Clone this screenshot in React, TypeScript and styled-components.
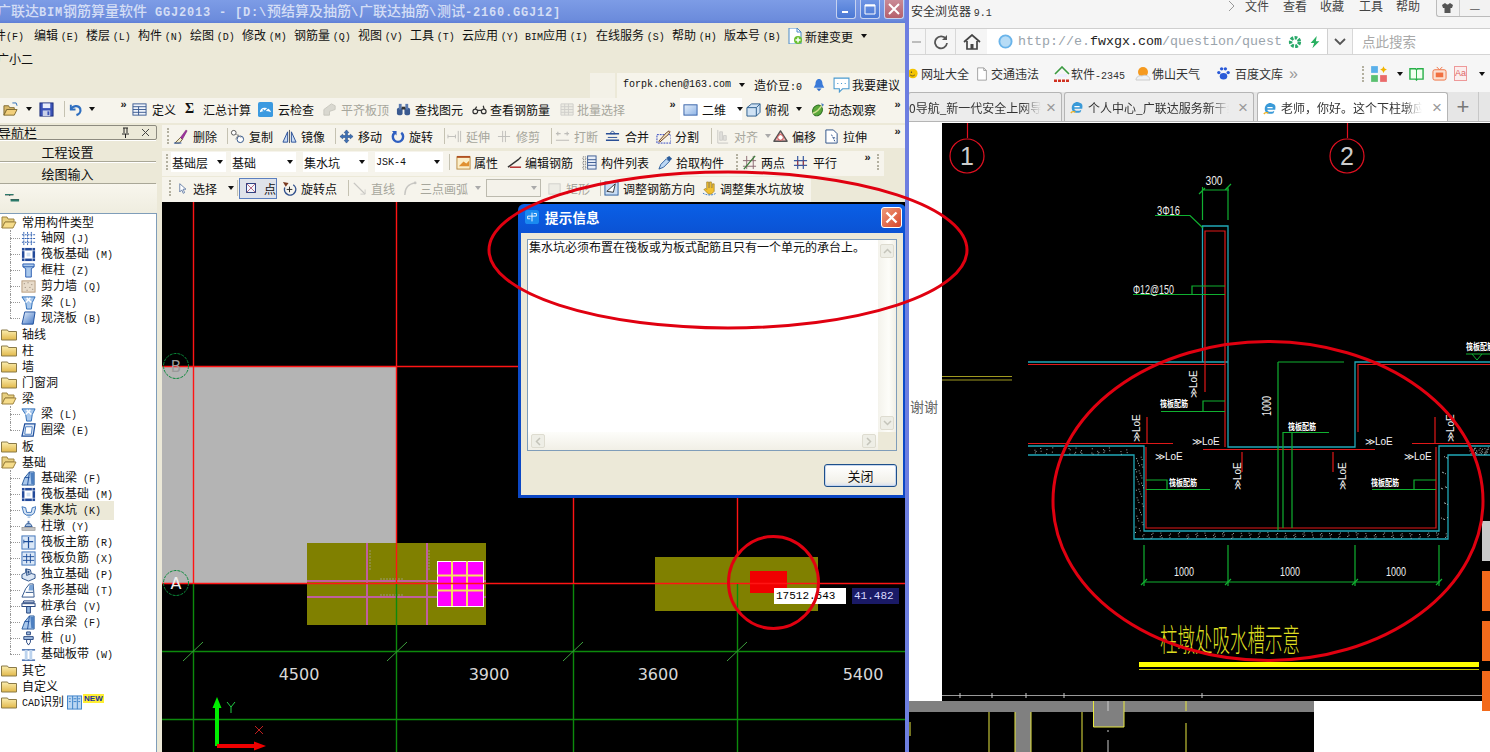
import React from 'react';
import styled, { createGlobalStyle } from 'styled-components';

const Global = createGlobalStyle`
  html, body { margin: 0; padding: 0; height: 100%; overflow: hidden; background: #fff; }
  body { font: 12px "Noto Sans CJK SC", "Noto Sans", sans-serif; color: #111; }
  #root { width: 1490px; height: 752px; }
  * { box-sizing: border-box; }
`;

const Desktop = styled.div`
  position: relative; display: flex; width: 1490px; height: 752px; overflow: hidden;
`;
const L = styled.span`
  font-family: "Liberation Mono", monospace; font-size: 10px; white-space: pre;
`;
const LeftWin = styled.div`
  width: 909px; flex: none; display: flex; flex-direction: column; background: #ece9d8;
  border-right: 4px solid #6d7ee0;
`;
const TitleBar = styled.div`
  height: 23px; flex: none; display: flex; justify-content: space-between; overflow: hidden;
  background: linear-gradient(#7d9ce6, #6c8cdc 85%, #5f7fd6);
  color: #d3ddf5;
`;
const TitleText = styled.div`
  margin-left: -3px; font-size: 14px; line-height: 20px; font-weight: 500; white-space: pre;
  ${L} { font-size: 12px; letter-spacing: .8px; font-weight: 700; }
`;
const WinBtns = styled.div`display: flex; gap: 4px; margin-right: 1px;`;
const WinBtn = styled.div<{ $red?: boolean }>`
  width: 20px; height: 19px; display: flex; align-items: center; justify-content: center;
  border-radius: 0 0 3px 3px; border: 1px solid #c6d2f0; border-top: 0;
  background: ${p => (p.$red ? 'linear-gradient(#c98a96,#b5606c)' : 'linear-gradient(#6f95e4,#4a78d4)')};
`;
const MenuRow = styled.div`
  height: 24px; flex: none; display: flex; align-items: center; overflow: hidden; padding-top: 2px;
`;
const MenuItem = styled.div<{ $w: number; $m?: number }>`
  width: ${p => p.$w}px; flex: none; margin-left: ${p => p.$m ?? 0}px; white-space: nowrap; line-height: 16px;
`;
const SubMenu = styled.div`
  height: 24px; flex: none; line-height: 24px; margin-left: -3px;
`;
const AccountRow = styled.div`
  height: 27px; flex: none; display: flex; padding-left: 590px; gap: 2px; padding-top: 2px;
`;
const Ghost = styled.div`width: 25px; background: #f3f1e7;`;
const AccountBox = styled.div`
  flex: 1; display: flex; align-items: center; background: #f6f4eb; padding: 0 0 2px 6px;
`;
const Toolbar = styled.div<{ $w?: number; $pad?: number; $h?: number; $pb?: number }>`
  height: ${p => p.$h ?? 25}px; flex: none; display: flex; align-items: center; background: #f6f4ec; overflow: hidden;
  padding-left: ${p => p.$pad ?? 0}px; padding-bottom: ${p => p.$pb ?? 3}px;
  ${p => (p.$w ? `width: ${p.$w}px;` : '')}
`;
const Slot = styled.div<{ $w: number; $gap?: number; $off?: boolean }>`
  width: ${p => p.$w}px; flex: none; height: 100%; display: flex; align-items: center; gap: ${p => p.$gap ?? 4}px;
  color: ${p => (p.$off ? '#a6a69c' : '#111')}; white-space: nowrap;
  svg { flex: none; ${p => (p.$off ? 'opacity: .5;' : '')} }
`;
const Sep = styled.div<{ $w: number }>`
  width: ${p => p.$w}px; flex: none; height: 16px; display: flex; justify-content: center;
  &::before { content: ''; width: 1px; background: #c5c2b2; }
`;
const Grip = styled.div<{ $w: number }>`
  width: ${p => p.$w}px; flex: none; height: 16px; display: flex; justify-content: center;
  &::before { content: ''; width: 0; border-left: 2px dotted #b3b0a0; }
`;
const Caret = styled.span<{ $m?: number; $off?: boolean }>`
  flex: none; width: 0; height: 0; margin-left: ${p => p.$m ?? 0}px;
  border: 3px solid transparent; border-top: 4px solid ${p => (p.$off ? '#aaa' : '#111')}; border-bottom: 0;
`;
const Chevrons = styled.div<{ $w: number }>`
  width: ${p => p.$w}px; flex: none; height: 100%; padding-top: 0; font: 700 11px/13px "Liberation Sans", sans-serif;
  text-align: center; color: #222;
`;
const WhiteBox = styled.div`
  width: 62px; flex: none; height: 22px; background: #fff; display: flex; align-items: center; gap: 4px; padding-left: 3px; margin-right: 4px; white-space: nowrap;
  svg { flex: none; }
`;
const Combo = styled.div<{ $w: number; $m?: number }>`
  width: ${p => p.$w}px; margin-right: ${p => p.$m ?? 0}px; flex: none; height: 20px; background: #fff;
  display: flex; align-items: center; justify-content: space-between; padding: 0 3px 0 1px; white-space: nowrap;
`;
const EmptyCombo = styled.div`
  width: 55px; flex: none; height: 18px; margin-right: 6px; background: #f4f2ea; border: 1px solid #bcbaae;
  display: flex; align-items: center; justify-content: flex-end; padding-right: 3px;
`;
const PressedSlot = styled(Slot)`
  height: 21px; border: 1px solid #5b7fbf; background: #dfe3ea; padding-left: 5px; gap: 7px; margin-right: 5px;
`;
const Blank = styled.div`flex: 1; height: 28px; background: #ece9d8; margin-left: 3px;`;
const Body = styled.div`flex: 1; min-height: 0; display: flex;`;
const Nav = styled.div`
  width: 157px; flex: none; display: flex; flex-direction: column; padding-top: 2px;
`;
const NavHead = styled.div`
  height: 15px; flex: none; margin-left: -3px; display: flex; align-items: center; justify-content: space-between;
  border: 1px solid #8d8b80; border-radius: 2px; padding-right: 3px; font-size: 13px; line-height: 13px; overflow: hidden;
`;
const NavBtn = styled.div`
  height: 22px; flex: none; margin-right: 1px; display: flex; align-items: center; justify-content: center;
  border-bottom: 1px solid #a9a797; border-top: 1px solid #fff; padding-right: 21px; background: #ece9d8; font-size: 13px;
  &:first-of-type { margin-top: 1px; }
`;
const NavTools = styled.div`
  height: 29px; flex: none; padding: 9px 0 0 5px; background: linear-gradient(#f8f6ee, #efeddf);
`;
const Tree = styled.div`
  flex: 1; background: #fff; border-top: 1px solid #7f9db9; border-right: 1px solid #7f9db9; overflow: hidden; padding-top: 0;
`;
const Row = styled.div<{ $child?: boolean; $last?: boolean }>`
  height: 16px; display: flex; align-items: center; position: relative; white-space: nowrap;
  padding-left: ${p => (p.$child ? 21 : 1)}px;
  ${p => p.$child ? `&::before { content: ''; position: absolute; left: 10px; top: 0; height: ${p.$last ? '8px' : '16px'}; border-left: 1px dotted #999; }
     &::after { content: ''; position: absolute; left: 10px; top: 8px; width: 10px; border-top: 1px dotted #999; }` : ''}
`;
const RowLabel = styled.span<{ $sel?: boolean; $m: number }>`
  margin-left: ${p => p.$m}px; padding: 0 ${p => (p.$sel ? 13 : 1)}px 0 1px; line-height: 16px;
  background: ${p => (p.$sel ? '#ece9d8' : 'transparent')};
`;
const NewBadge = styled.span`
  margin: -8px 0 0 1px; background: #ffee33; color: #2030a0; font: 700 8px/9px "Liberation Sans", sans-serif; padding: 0 1px;
`;
const Main = styled.div`
  flex: 1; min-width: 0; margin-left: 5px; display: flex; flex-direction: column; gap: 0; padding-top: 2px;
`;
const StackRow = styled.div<{ $mt?: number }>`margin-top: ${p => p.$mt ?? 0}px; flex: none;`;
const Canvas = styled.div`
  flex: 1; min-height: 0; position: relative; background: #000; overflow: hidden;
  > svg { display: block; }
`;
const CoordBox = styled.div<{ $l: number; $w: number; $navy?: boolean }>`
  position: absolute; left: ${p => p.$l}px; top: 386px; width: ${p => p.$w}px; height: 16px; padding-left: 2px;
  background: ${p => (p.$navy ? '#1a1a66' : '#fff')}; color: ${p => (p.$navy ? '#d8d8ff' : '#000')};
  font: 11px/16px "Liberation Mono", monospace;
`;
const Dialog = styled.div`
  position: absolute; left: 356px; top: 2px; width: 388px; height: 294px; display: flex; flex-direction: column;
  background: linear-gradient(#0a5fe6, #0b50d0 12%, #0c47c4); border-radius: 6px 6px 0 0; padding: 0 3px 3px;
`;
const DlgTitle = styled.div`
  height: 29px; flex: none; display: flex; align-items: center; padding: 0 0 3px 4px; gap: 6px;
  color: #fff; font-weight: 700; font-size: 13.5px; letter-spacing: .2px;
`;
const DlgClose = styled.div`
  margin-left: auto; margin-right: 1px; width: 21px; height: 21px; border: 1px solid #fff; border-radius: 3px;
  background: linear-gradient(135deg, #ee9a78, #d8452a); display: flex; align-items: center; justify-content: center;
`;
const DlgClient = styled.div`
  flex: 1; background: #ece9d8; padding: 6px 6px 8px; display: flex; flex-direction: column; align-items: flex-end;
`;
const DlgBox = styled.div`
  width: 100%; height: 212px; flex: none; border: 1px solid #7f9db9; display: grid; grid-template-columns: 1fr 18px; grid-template-rows: 1fr 18px;
`;
const DlgText = styled.div`background: #fff; padding: 0 1px; line-height: 14px; font-size: 12px;`;
const VScroll = styled.div`
  background: linear-gradient(90deg, #f4f3ec, #fdfdf9 60%, #f1efe6); display: flex; flex-direction: column; justify-content: space-between; padding: 4px 2px 2px;
`;
const HScroll = styled.div`
  background: linear-gradient(#fdfdfa, #f1efe6); display: flex; justify-content: space-between; padding: 2px 2px 2px 3px;
`;
const Corner = styled.div`background: #ece9d8;`;
const ScrollBtn = styled.div`
  width: 14px; height: 14px; background: #eeeee6; border: 1px solid #dedcd0; border-radius: 2px; display: flex; align-items: center; justify-content: center;
`;
const DlgButton = styled.div`
  margin-top: 13px; width: 73px; height: 23px; border: 1px solid #1d4f8a; border-radius: 3px; text-align: center; line-height: 21px;
  background: linear-gradient(#fff, #f2f1ea 80%, #d8dfee); box-shadow: inset 0 0 0 1px #c5d6ee; font-size: 13px;
`;
const Annotate = styled.svg`position: absolute; left: 0; top: 0; pointer-events: none;`;

/* browser */
const Browser = styled.div`flex: 1; min-width: 0; display: flex; flex-direction: column; background: #f5f5f5;`;
const BrTitle = styled.div`
  height: 28px; flex: none; display: flex; justify-content: space-between; padding-left: 2px; overflow: hidden;
`;
const BrTitleText = styled.div`padding-top: 3px; line-height: 16px; color: #333;`;
const BrMenu = styled.div`display: flex; align-items: flex-start; line-height: 12px; color: #444; letter-spacing: 0;`;
const BrMenuItem = styled.span<{ $w: number }>`width: ${p => p.$w}px; flex: none;`;
const SkinBtns = styled.div`
  display: flex; width: 54px; height: 17px; border: 1px solid #bbb; border-top: 0; border-right: 0; border-radius: 0 0 0 3px; margin-top: 0;
  margin-left: 1px; background: #f2f2f2;
`;
const SkinPart = styled.div`
  flex: 1; display: flex; align-items: center; justify-content: center; border-right: 1px solid #ccc; color: #555; font-size: 12px;
  &:last-child { border-right: 0; flex: 1.4; }
`;
const AddrRow = styled.div`
  height: 27px; flex: none; display: flex; align-items: stretch; border-top: 1px solid #cfcfcf; border-bottom: 1px solid #d5d5d5;
`;
const AddrCell = styled.div<{ $w?: number; $plain?: boolean }>`
  width: ${p => p.$w}px; flex: none; display: flex; align-items: center; justify-content: center; color: #999;
  border-right: ${p => (p.$plain ? '0' : '1px solid #d8d8d8')};
`;
const AddrField = styled.div`
  width: 341px; flex: none; display: flex; align-items: center; background: #fff; border-right: 1px solid #d0d0d0; padding-left: 11px; overflow: hidden;
`;
const Url = styled.span`
  margin-left: 5px; font: 13.33px "Liberation Mono", monospace; color: #9aa4ac; white-space: pre; width: 263px; overflow: hidden;
`;
const UrlDark = styled.span`color: #222;`;
const UrlIcon = styled.span<{ $m: number }>`margin-left: ${p => p.$m}px; display: flex;`;
const SearchField = styled.div`
  flex: 1; background: #fff; padding-left: 9px; line-height: 25px; font-size: 13.5px; color: #a8a8a8;
`;
const Bookmarks = styled.div`
  height: 37px; flex: none; display: flex; align-items: center; background: #f6f6f6; white-space: nowrap; color: #333; overflow: hidden;
`;
const Mark = styled.div<{ $w: number; $gap?: number; $m?: number }>`
  width: ${p => p.$w}px; flex: none; display: flex; align-items: center; gap: ${p => p.$gap ?? 2}px; margin-left: ${p => p.$m ?? 0}px;
  svg { flex: none; }
`;
const MoreMark = styled.span`color: #999; font: 16px "Liberation Sans", sans-serif;`;
const AaIcon = styled.span`
  width: 15px; height: 15px; border: 1px solid #e99; color: #d66; font: 9px/13px "Liberation Sans", sans-serif; text-align: center; background: #fbeeee;
`;
const Tabs = styled.div`
  height: 30px; flex: none; display: flex; align-items: flex-end; background: #e6e6e6; border-bottom: 1px solid #b5b5b5; color: #333; overflow: hidden;
`;
const Tab = styled.div<{ $w: number; $on?: boolean; $m?: number; $first?: boolean }>`
  position: relative; width: ${p => p.$w}px; height: ${p => (p.$on ? 30 : 29)}px; flex: none; margin-left: ${p => p.$m ?? 0}px; margin-bottom: ${p => (p.$on ? -1 : 0)}px;
  display: flex; align-items: center; gap: 4px; padding-left: ${p => (p.$first ? 0 : 5)}px; white-space: nowrap; overflow: hidden;
  background: ${p => (p.$on ? '#fff' : '#ececec')}; border: 1px solid #b5b5b5; border-bottom: 0; border-radius: 3px 3px 0 0;
  svg { flex: none; }
`;
const TabFade = styled.span<{ $w: number }>`
  overflow: hidden; width: ${p => p.$w}px; flex: none;
  -webkit-mask-image: linear-gradient(90deg, #000 86%, transparent);
`;
const TabX = styled.span`
  position: absolute; right: 3px; top: 6px; width: 14px; text-align: center; font: 17px/17px "Liberation Sans", sans-serif; color: #999;
`;
const TabPlus = styled.div`
  width: 31px; flex: none; height: 29px; text-align: center; border-right: 1px solid #c8c8c8; font: 22px/29px "Liberation Sans", sans-serif; color: #777;
`;
const PageArea = styled.div`flex: 1; min-height: 0; position: relative; background: #fff; display: flex; flex-direction: column; overflow: hidden; padding-top: 1px;`;
const PageUpper = styled.div`display: flex; height: 578px; flex: none; svg { display: block; flex: none; }`;
const Gutter = styled.div`width: 33px; flex: none; padding-top: 273px; padding-left: 1px; color: #666; font-size: 14px; white-space: nowrap; overflow: hidden;`;
const LowerWrap = styled.div`height: 51px; flex: none; svg { display: block; }`;
const SideBtn = styled.div<{ $top: number; $gray?: boolean }>`
  position: absolute; right: 0; top: ${p => p.$top}px; width: 8px; height: 40px;
  background: ${p => (p.$gray ? '#c9c9c9' : '#f26a1b')};
`;
const SigmaText = styled.span`font: 700 14px "Liberation Serif", serif; width: 10px;`;
const Spacer = styled.span<{ $w: number }>`width: ${p => p.$w}px; flex: none;`;
const ActIcon = styled.span<{ $m: number }>`margin-left: ${p => p.$m}px; display: flex;`;
const ActText = styled.span<{ $m: number }>`margin-left: ${p => p.$m}px;`;

/* ---------- icons ---------- */
const Svg = ({ s = 15, children }: { s?: number; children: React.ReactNode }) => (
  <svg width={s} height={s} viewBox="0 0 16 16" fill="none">{children}</svg>
);
const LB = '#a9c8ec';
const I: Record<string, React.ReactNode> = {
  folderO: <><path d="M1 3h5l1 2h6v3H4L1 14z" fill="#e8d080" stroke="#9c8240" /><path d="M1 14l3-6h11l-3 6z" fill="#f6dc8a" stroke="#9c8240" /></>,
  folderC: <><path d="M.5 4h6l1 1.500h8V14H.5z" fill="url(#fg)" stroke="#8a7a48" /></>,
  grid: <><path d="M3 1v14M7 1v14M11 1v14M1 4h14M1 8h14M1 12h14" stroke="#2a5cb0" strokeDasharray="2 1" /></>,
  raft: <><rect x="1" y="1" width="14" height="14" fill="#234a9a" /><rect x="4" y="4" width="8" height="8" fill="#fff" /><path d="M1 4h14M1 12h14M4 1v14M12 1v14" stroke="#fff" strokeWidth=".6" /><rect x="6" y="6" width="4" height="4" fill="#cfe0f4" /></>,
  column: <><path d="M2 1h12v3l-3 2v9H5V6L2 4z" fill={LB} stroke="#2a5cb0" /><path d="M2 4h12" stroke="#2a5cb0" /></>,
  wall: <><rect x="1" y="2" width="14" height="12" fill="#e8dccb" stroke="#b59a7a" /><path d="M3 5h1M7 4h1M11 6h1M4 9h1M9 9h1M12 11h1M6 12h1" stroke="#8a7a6a" /></>,
  beam: <><path d="M1 2h14l-3 6-1 7H6L5 8z" fill={LB} stroke="#2a6cb8" /><path d="M6 3l5 5M10 3L5 8" stroke="#fff" strokeWidth="1.500" /></>,
  slab: <><path d="M4 1h11l-2 13H1z" fill="url(#sl)" stroke="#1f4f9c" /></>,
  ring: <><path d="M4 1h11l-2 13H1z" fill="#dfeaf8" stroke="#1f4f9c" strokeWidth="1.300" /><path d="M5 4h7l-1 8H4z" fill="#fff" stroke="#4a7cc0" /></>,
  fbeam: <><path d="M1 15l3-8 5-6h5v14z" fill={LB} stroke="#2a5c9c" /><path d="M9 1l-2 14M4 7h5" stroke="#1f4f9c" /><path d="M10 2h4v12h-3z" fill="#4d7fc0" /></>,
  sump: <><path d="M1 4l4 1 1 5h5l1-5 4-1-2 7-3 2H6l-3-2z" fill="#d5e4f5" stroke="#3a70b8" /><path d="M6 13h5M7 15h3" stroke="#6a9ad0" /></>,
  pier: <><path d="M7 2h2v3H7z" fill="#5c7fb0" /><path d="M4 8l2-3h4l2 3z" fill="#a8c4e4" stroke="#355d98" /><rect x="1" y="9" width="14" height="3" fill="#c4c4c4" stroke="#808080" strokeWidth=".6" /></>,
  mainbar: <><rect x="1" y="1" width="14" height="14" fill="#dbe8f7" stroke="#3a70b8" /><path d="M8 2v12M3 7h10" stroke="#1f4f9c" strokeWidth="1.300" /><path d="M3 5v4" stroke="#1f4f9c" /></>,
  negbar: <><rect x="1" y="1" width="14" height="14" fill="#dbe8f7" stroke="#3a70b8" /><path d="M2 6h12M2 10h12M6 3v10M10 3v10" stroke="#1f4f9c" /></>,
  iso: <><path d="M1 8l4-2V2l5 1 1 4 4 1v4l-7 3-7-3z" fill="#dbe6f4" stroke="#2a4f86" /><path d="M6 2v7l5-2" stroke="#2a4f86" /><path d="M7 4h2v3H7z" fill="#2a4f86" /></>,
  strip: <><path d="M1 15l4-9 4-5h4l1 14z" fill="#fff" stroke="#2a4f86" /><path d="M9 2h4v6H8z" fill="#7aa5d8" /><path d="M5 10h8" stroke="#2a4f86" /></>,
  cap: <><path d="M3 2h11v2H2z" fill="#e8eef8" stroke="#1f3f7a" /><rect x="1" y="5" width="14" height="3" fill="#fff" stroke="#1f3f7a" /><path d="M6 8h4v7H6z" fill="#8fb2dc" stroke="#1f3f7a" /></>,
  pile: <><path d="M6 1h4v3H6zM3 6h10v3H3z" fill="#a9c4e6" stroke="#1f3f7a" /><path d="M6 9h4v3l-2 3-2-3z" fill="#fff" stroke="#1f3f7a" /></>,
  band: <><path d="M1 3h14M1 14h14" stroke="#1f4f9c" strokeWidth="1.400" /><rect x="4" y="3" width="3" height="11" fill="#bcd3ee" /><rect x="9" y="3" width="3" height="11" fill="#bcd3ee" /></>,
  cad: <><rect x=".5" y="1" width="15" height="14" fill="#bcd7f2" stroke="#3a80c8" /><path d="M6 1v14M11 1v14" stroke="#3a80c8" /><path d="M2 4h2M2 7h2M7 4h3M7 7h3M12 4h2M12 7h2" stroke="#3a80c8" /></>,
  open: <><path d="M1 4h5l1 2h5v2H4L1 14z" fill="#d8b868" stroke="#7f6a30" /><path d="M1 14l3-6h11l-3 6z" fill="#f2cf7a" stroke="#7f6a30" /><path d="M10 1l4 0 1 3" stroke="#2a6cb8" /></>,
  save: <><rect x="1" y="1" width="14" height="14" fill="#3b53b8" stroke="#1e2f78" /><rect x="4" y="1.500" width="8" height="5" fill="#eaeefc" /><rect x="4" y="9" width="8" height="6" fill="#c9d0e8" /><rect x="9" y="10" width="2" height="4" fill="#3b53b8" /></>,
  undo: <><path d="M3 3v5h5" stroke="#2f6fc0" strokeWidth="2" /><path d="M3 8c2-4 8-5 10-1 1 3-1 6-4 7" stroke="#2f6fc0" strokeWidth="2.400" /></>,
  define: <><rect x="1" y="2" width="14" height="12" fill="#f0f4fb" stroke="#3a5a90" /><path d="M1 5h14M1 8h14M1 11h14M7 5v9" stroke="#3a5a90" /></>,
  cloud: <><rect x="0" y="0" width="16" height="16" rx="2" fill="#3b9ae0" /><path d="M2 11c0-3 2-5 5-5 4 0 6 2 7 5-4-2-8-2-12 0z" fill="#fff" /><path d="M5 8l2 2 4-4" stroke="#3b9ae0" strokeWidth="1.300" /></>,
  level: <><path d="M2 8l8-6 4 2v4l-6 2v4H2z" fill="#bdbdb6" stroke="#9a9a90" /></>,
  binoc: <><rect x="1" y="6" width="6" height="8" rx="2" fill="#3a5a90" /><rect x="9" y="6" width="6" height="8" rx="2" fill="#3a5a90" /><rect x="3" y="2" width="3" height="6" fill="#5a7ab0" /><rect x="10" y="2" width="3" height="6" fill="#5a7ab0" /><rect x="6" y="5" width="4" height="3" fill="#333" /></>,
  glasses: <><path d="M1 10a2.500 2.500 0 1 0 5 0a2.500 2.500 0 1 0-5 0M10 10a2.500 2.500 0 1 0 5 0a2.500 2.500 0 1 0-5 0M6 9h4M3 8l2-3M13 8l-1-4" stroke="#333" strokeWidth="1.300" /></>,
  batch: <><path d="M1 2h13v12H1z" fill="#e4e4dc" stroke="#aaa" /><path d="M1 5h13M1 8h13M1 11h13M5 2v12M9 2v12" stroke="#aaa" /></>,
  two: <><rect x="1" y="3" width="14" height="11" fill="url(#tw)" stroke="#3560a8" /></>,
  cube: <><path d="M1 6l5-4h9v9l-4 4H1z" fill="#cfe2f4" stroke="#2a5c8c" /><path d="M1 6h10v9M11 6l4-4" stroke="#2a5c8c" /></>,
  orbit: <><ellipse cx="8" cy="9" rx="5" ry="6" transform="rotate(30 8 9)" fill="#5aa83a" stroke="#2a6a20" /><path d="M3 12c3-1 7-4 10-9" stroke="#cfe090" strokeWidth="1.500" /><path d="M12 1l3 2-2 2" fill="#4a7cc0" /></>,
  del: <><path d="M2 15l6-6 2 2-3 4z" fill="#f0e8c8" stroke="#6a5a30" /><path d="M8 9l6-8 1 1-5 9z" fill="#a030a0" stroke="#702070" strokeWidth=".6" /><path d="M1 15h8" stroke="#2a5cb0" /></>,
  copy: <><circle cx="4" cy="4" r="2.500" stroke="#555" fill="#fff" /><circle cx="11" cy="11" r="3.500" stroke="#2a4f86" fill="#fff" /><path d="M6 5l6 4M6 11l3-5" stroke="#8a8a8a" /></>,
  mirror: <><path d="M1 14L6 3v11zM15 14L10 3v11z" fill="#c9dcf4" stroke="#2a4f96" /><path d="M8 1v14" stroke="#555" /></>,
  move: <><path d="M8 1l2.500 3H9v3h3V5.500L15 8l-3 2.500V9H9v3h1.500L8 15l-2.500-3H7V9H4v1.500L1 8l3-2.500V7h3V4H5.500z" fill="#3e72b8" stroke="#20457e" strokeWidth=".6" /></>,
  rotate: <><path d="M12 4a5.500 5.500 0 1 1-7 0" stroke="#2f5fc0" strokeWidth="2.600" /><path d="M2 2h5v5z" fill="#2f5fc0" /></>,
  extend: <><path d="M1 8h8M1 6v4M9 6v4M12 2v12M14.500 2v12" stroke="#888" /></>,
  trim: <><path d="M1 8h13M6 2v12M9 2v12" stroke="#888" /></>,
  breakk: <><path d="M1 5h5M10 5h5M1 12h14M3 3v4M13 3v4" stroke="#888" strokeWidth="1.300" /></>,
  merge: <><path d="M1 5h14M1 12h14" stroke="#2a4f96" strokeWidth="1.500" /><path d="M8 2l-3 3h6zM3 9h10" stroke="#2a4f96" /></>,
  split: <><path d="M1 6h15v9H1z" stroke="#2a40c0" strokeDasharray="2 1" /><path d="M3 13l8-9 3-2 1 1-2 3-9 8z" fill="#f4e8c0" stroke="#6a3a20" /></>,
  align: <><path d="M3 1v14h11" stroke="#999" /><path d="M5 3h3v9H5zM9 7h3v5H9z" fill="#ccc" stroke="#aaa" /></>,
  offset: <><path d="M1 13l7-11 7 11z" fill="#f5b0b0" stroke="#555" strokeLinejoin="round" strokeWidth="1.500" /><circle cx="8" cy="9" r="3" fill="#fff" stroke="#c04040" /></>,
  stretch: <><path d="M2 1h8l4 4v10H2z" fill="#fff" stroke="#2a4f86" /><path d="M8 6l4 8M10 9l3 1" stroke="#2a4f86" strokeDasharray="2 1" /></>,
  props: <><rect x="1" y="2" width="14" height="13" fill="#fbeec8" stroke="#b88a40" /><path d="M3 12l5-5 3 2 3-3v6z" fill="#e09030" /><path d="M1 2h14" stroke="#b05020" strokeWidth="2" /></>,
  rebar: <><path d="M1 13l11-8 3-3" stroke="#333" strokeWidth="1.500" /><path d="M3 13h12" stroke="#b02020" strokeWidth="1.500" /></>,
  list: <><path d="M1 2h3v3H1zM1 7h3v3H1zM1 12h3v3H1z" stroke="#666" strokeDasharray="1 1" /><rect x="6" y="1" width="9" height="14" fill="#e8eef8" stroke="#3a5a90" /><path d="M6 5h9M6 8h9M6 11h9" stroke="#3a5a90" /></>,
  pick: <><path d="M1 15l2-5 6-6 3 3-6 6z" fill="#bcd8f4" stroke="#2a5c9c" /><path d="M9 3l3-2 3 3-3 3z" fill="#2a5c9c" /></>,
  twop: <><path d="M1 6h14M1 12h14M5 1v14M12 1v14" stroke="#8a6a70" /><path d="M2 15L14 1" stroke="#3a7a3a" strokeWidth="1.400" /></>,
  par: <><path d="M1 6h14M1 11h14M5 1v14M11 1v14" stroke="#3a5aa0" strokeWidth="1.300" /><path d="M5 6v5M11 6v5" stroke="#b03030" /></>,
  cursor: <><path d="M4 1v12l3-3 2 5 2-1-2-5h4z" fill="#fff" stroke="#3a5a90" /></>,
  point: <><rect x="2" y="2" width="12" height="12" fill="#f4f6fc" stroke="#2a3f80" strokeWidth="1.300" /><path d="M2 2l12 12M14 2L2 14" stroke="#a04060" /></>,
  rotp: <><path d="M12 4a6 6 0 1 1-9 3" stroke="#2f4f8c" strokeWidth="1.500" /><path d="M1 1l6 1-3 4z" fill="#7a3a20" /><path d="M8 6v6M5 9h6" stroke="#222" /></>,
  line: <><path d="M2 2l12 12" stroke="#999" strokeWidth="1.500" /><path d="M9 14h5V9" stroke="#aaa" /></>,
  arc: <><path d="M3 15C3 8 7 3 14 2" stroke="#999" strokeWidth="1.500" /><circle cx="14" cy="2" r="1.500" fill="#999" /></>,
  rect: <><rect x="2" y="3" width="12" height="11" fill="#e6e6e0" stroke="#aaa" /></>,
  adjR: <><rect x="1" y="1" width="14" height="14" fill="#c9ddf4" stroke="#2a5c9c" /><path d="M3 11l9-8-2 9z" fill="#fff" stroke="#333" /></>,
  adjS: <><path d="M5 1h2v6h1V1h2v6h1V3h2v8l-3 3H7L2 9l2-1 1 1z" fill="#f2c030" stroke="#8a6a10" strokeWidth=".6" /><path d="M1 13c3 2 10 3 14 0" stroke="#3a7ac8" strokeDasharray="2 1" /></>,
  newdoc: <><path d="M2 0h8l4 4v12H2z" fill="#fff" stroke="#4a8ac8" /><path d="M10 0v4h4" stroke="#4a8ac8" /><circle cx="11" cy="12" r="4" fill="#6abf30" /><path d="M11 9.500v5M8.500 12h5" stroke="#fff" strokeWidth="1.500" /></>,
  bell: <><path d="M8 1c3 0 4 3 4 6l2 4H2l2-4c0-3 1-6 4-6z" fill="#3a7ad8" /><path d="M5 12l3 3 3-3z" fill="#2f6ac8" /></>,
  suggest: <><path d="M1 2h14v10H9l-3 3v-3H1z" fill="#fff" stroke="#4a9ad0" /><path d="M4 7h1M7.500 7h1M11 7h1" stroke="#4a9ad0" /></>,
  navtree: <><path d="M0 2h9M5 2v1M6 7h9" stroke="#2a3a3a" strokeWidth="1" /><path d="M0 1h9v1H0zM6 7h9v2H6z" fill="#2a7a6a" /></>,
  logoDlg: <><rect width="16" height="16" rx="3" fill="#1a8af0" /><path d="M8 3v10M3 7h10M3 7v3h3M13 7v-3h-3" stroke="#fff" /></>,
  shield: <><circle cx="8" cy="8" r="6.500" fill="#b7dcf6" stroke="#6ab4ea" strokeWidth="2" /></>,
  ring360: <><circle cx="8" cy="8" r="5" stroke="#2aa96a" strokeWidth="4" strokeDasharray="3 1.500" /></>,
  bolt: <><path d="M10 1L3 9h4l-2 6 8-8H9z" fill="#28b060" /></>,
  smile: <><circle cx="7" cy="8" r="7" fill="#f4c400" /><circle cx="5" cy="6" r="1" fill="#333" /><path d="M3 10c2 2 5 2 7 0" stroke="#333" /></>,
  doc: <><path d="M3 1h7l3 3v11H3z" fill="#fff" stroke="#999" /><path d="M10 1v3h3" stroke="#999" /></>,
  soft: <><path d="M1 8l7-7 7 7" stroke="#3a9a40" strokeWidth="1.600" /><path d="M3 8h10v3H3z" fill="#eef" /><path d="M0 15h16" stroke="#d03020" strokeWidth="3" strokeDasharray="3 1" /></>,
  weather: <><circle cx="8" cy="6" r="5" fill="#f59a20" /><path d="M1 14c0-3 3-5 6-4 3-2 8 0 8 4z" fill="#eef2f6" stroke="#ccc" /></>,
  paw: <><ellipse cx="8" cy="11" rx="4" ry="3.500" fill="#2a5ad8" /><circle cx="3" cy="7" r="1.800" fill="#2a5ad8" /><circle cx="6" cy="3" r="1.800" fill="#2a5ad8" /><circle cx="10" cy="3" r="1.800" fill="#2a5ad8" /><circle cx="13" cy="7" r="1.800" fill="#2a5ad8" /></>,
  apps: <><rect x="1" y="1" width="6" height="6" fill="#5ab0ea" /><path d="M12 1l1 2 2 1-2 1-1 2-1-2-2-1 2-1z" fill="#f2b400" /><rect x="1" y="9" width="6" height="6" fill="#5ac070" /><rect x="9" y="9" width="6" height="6" fill="#ea6a6a" /></>,
  book: <><path d="M1 3h6l1 1 1-1h6v11H9l-1 1-1-1H1z" fill="#f2fff0" stroke="#28b048" strokeWidth="1.500" /><path d="M8 4v11" stroke="#28b048" /></>,
  tv: <><path d="M5 1l3 3 3-3" stroke="#f07040" /><rect x="1" y="4" width="14" height="11" rx="2" fill="#fbe0d0" stroke="#f07040" /><rect x="4" y="7" width="8" height="5" fill="#f07040" /></>,
  ie: <><path d="M2 9c0-5 5-8 9-6l2 1c2 2 1 4 1 6H5c0 3 5 3 8 1l-1 3c-6 2-10-1-10-5z" fill="#3a9ad8" /><path d="M5 7.500h6" stroke="#fff" strokeWidth="1.500" /><path d="M1 15c1-2 4-2 5-1" stroke="#f0b020" strokeWidth="1.500" /></>,
};
const Ico = ({ n, s }: { n: string; s?: number }) => <Svg s={s}>{I[n]}</Svg>;

const HiddenDefs = styled.svg`position: absolute;`;
const Defs = () => (
  <HiddenDefs width="0" height="0">
    <defs>
      <linearGradient id="fg" x1="0" y1="0" x2="0" y2="1"><stop offset="0" stopColor="#fbeeb0" /><stop offset="1" stopColor="#e2b84a" /></linearGradient>
      <linearGradient id="sl" x1="0" y1="0" x2="1" y2="1"><stop offset="0" stopColor="#e8f1fb" /><stop offset="1" stopColor="#3f74c4" /></linearGradient>
      <linearGradient id="tw" x1="0" y1="0" x2="1" y2="1"><stop offset="0" stopColor="#e4eefa" /><stop offset="1" stopColor="#8fb4e6" /></linearGradient>
    </defs>
  </HiddenDefs>
);

type ToolP = { n?: string; t?: string; w: number; off?: boolean; drop?: number; gap?: number };
const Tool = ({ n, t, w, off, drop, gap }: ToolP) => (
  <Slot $w={w} $off={off} $gap={gap}>
    {n && <Ico n={n} />}
    {t && <span>{t}</span>}
    {drop !== undefined && <Caret $m={drop} $off={off} />}
  </Slot>
);

const menu: [string, string, number][] = [
  ['编辑', '(E)', 52], ['楼层', '(L)', 52], ['构件', '(N)', 52], ['绘图', '(D)', 52], ['修改', '(M)', 52],
  ['钢筋量', '(Q)', 64], ['视图', '(V)', 52], ['工具', '(T)', 52], ['云应用', '(Y)', 63],
];
const menu2: [string, string, number][] = [
  ['在线服务', '(S)', 76], ['帮助', '(H)', 52], ['版本号', '(B)', 63],
];

type Node = { k: 'f' | 'o' | 'c'; t: string; s?: string; i?: string; last?: boolean; sel?: boolean };
const tree: Node[] = [
  { k: 'o', t: '常用构件类型' },
  { k: 'c', i: 'grid', t: '轴网', s: '(J)' },
  { k: 'c', i: 'raft', t: '筏板基础', s: '(M)' },
  { k: 'c', i: 'column', t: '框柱', s: '(Z)' },
  { k: 'c', i: 'wall', t: '剪力墙', s: '(Q)' },
  { k: 'c', i: 'beam', t: '梁', s: '(L)' },
  { k: 'c', i: 'slab', t: '现浇板', s: '(B)', last: true },
  { k: 'f', t: '轴线' }, { k: 'f', t: '柱' }, { k: 'f', t: '墙' }, { k: 'f', t: '门窗洞' },
  { k: 'o', t: '梁' },
  { k: 'c', i: 'beam', t: '梁', s: '(L)' },
  { k: 'c', i: 'ring', t: '圈梁', s: '(E)', last: true },
  { k: 'f', t: '板' },
  { k: 'o', t: '基础' },
  { k: 'c', i: 'fbeam', t: '基础梁', s: '(F)' },
  { k: 'c', i: 'raft', t: '筏板基础', s: '(M)' },
  { k: 'c', i: 'sump', t: '集水坑', s: '(K)', sel: true },
  { k: 'c', i: 'pier', t: '柱墩', s: '(Y)' },
  { k: 'c', i: 'mainbar', t: '筏板主筋', s: '(R)' },
  { k: 'c', i: 'negbar', t: '筏板负筋', s: '(X)' },
  { k: 'c', i: 'iso', t: '独立基础', s: '(P)' },
  { k: 'c', i: 'strip', t: '条形基础', s: '(T)' },
  { k: 'c', i: 'cap', t: '桩承台', s: '(V)' },
  { k: 'c', i: 'fbeam', t: '承台梁', s: '(F)' },
  { k: 'c', i: 'pile', t: '桩', s: '(U)' },
  { k: 'c', i: 'band', t: '基础板带', s: '(W)', last: true },
  { k: 'f', t: '其它' }, { k: 'f', t: '自定义' },
];

const Folder = ({ o }: { o?: boolean }) => <Svg s={16}>{o ? I.folderO : I.folderC}</Svg>;

const NavPanel = () => (
  <Nav>
    <NavHead>
      <span>导航栏</span>
      <svg width="34" height="12" viewBox="0 0 34 12" fill="none">
        <path d="M4 1h5M5 1v5M8 1v5M3 7h7M6.500 7v4" stroke="#222" />
        <path d="M23 2l7 7M30 2l-7 7" stroke="#444" />
      </svg>
    </NavHead>
    <NavBtn>工程设置</NavBtn>
    <NavBtn>绘图输入</NavBtn>
    <NavTools><Ico n="navtree" /></NavTools>
    <Tree>
      {tree.map((r, i) => (
        <Row key={i} $child={r.k === 'c'} $last={r.last}>
          {r.k === 'c' ? <Ico n={r.i!} /> : <Folder o={r.k === 'o'} />}
          <RowLabel $m={4} $sel={r.sel}>{r.t}{r.s && <L> {r.s}</L>}</RowLabel>
        </Row>
      ))}
      <Row>
        <Folder />
        <RowLabel $m={4}><L>CAD</L>识别</RowLabel>
        <Spacer $w={2} />
        <Ico n="cad" />
        <NewBadge>NEW</NewBadge>
      </Row>
    </Tree>
  </Nav>
);

const Tb1 = () => (
  <Toolbar $pad={3}>
    <Tool n="open" w={22} />
    <Slot $w={14}><Caret $m={1} /></Slot>
    <Tool n="save" w={21} />
    <Sep $w={8} />
    <Tool n="undo" w={21} />
    <Slot $w={26}><Caret $m={0} /></Slot>
    <Chevrons $w={17}>»</Chevrons>
    <Tool n="define" t="定义" w={53} gap={5} />
    <Slot $w={73} $gap={8}><SigmaText>Σ</SigmaText><span>汇总计算</span></Slot>
    <Tool n="cloud" t="云检查" w={64} gap={5} />
    <Tool n="level" t="平齐板顶" w={74} off />
    <Tool n="binoc" t="查找图元" w={76} />
    <Tool n="glasses" t="查看钢筋量" w={88} gap={3} />
    <Tool n="batch" t="批量选择" w={105} off gap={2} />
    <Chevrons $w={15}>»</Chevrons>
    <WhiteBox><Ico n="two" /><span>二维</span><Caret $m={7} /></WhiteBox>
    <Tool n="cube" t="俯视" w={64} drop={3} />
    <Tool n="orbit" t="动态观察" w={80} gap={3} />
    <Chevrons $w={15}>»</Chevrons>
  </Toolbar>
);
const Tb2 = () => (
  <Toolbar $pad={1} $h={23} $pb={1}>
    <Grip $w={10} />
    <Tool n="del" t="删除" w={51} gap={5} />
    <Sep $w={6} />
    <Tool n="copy" t="复制" w={52} />
    <Tool n="mirror" t="镜像" w={50} />
    <Sep $w={7} />
    <Tool n="move" t="移动" w={51} />
    <Tool n="rotate" t="旋转" w={51} />
    <Sep $w={6} />
    <Tool n="extend" t="延伸" w={50} off />
    <Tool n="trim" t="修剪" w={51} off />
    <Sep $w={7} />
    <Tool n="breakk" t="打断" w={50} off />
    <Tool n="merge" t="合并" w={51} gap={5} />
    <Tool n="split" t="分割" w={51} />
    <Sep $w={8} />
    <Tool n="align" t="对齐" w={58} off drop={3} />
    <Tool n="offset" t="偏移" w={51} />
    <Tool n="stretch" t="拉伸" w={66} />
    <Chevrons $w={15}>»</Chevrons>
  </Toolbar>
);
const Tb3 = () => (
  <Toolbar $pad={1}>
    <Grip $w={8} />
    <Combo $w={55} $m={5}><span>基础层</span><Caret /></Combo>
    <Combo $w={65} $m={7}><span>基础</span><Caret /></Combo>
    <Combo $w={65} $m={7}><span>集水坑</span><Caret /></Combo>
    <Combo $w={68}><L>JSK-4</L><Caret /></Combo>
    <Sep $w={13} />
    <Tool n="props" t="属性" w={51} gap={3} />
    <Tool n="rebar" t="编辑钢筋" w={75} gap={3} />
    <Tool n="list" t="构件列表" w={76} />
    <Tool n="pick" t="拾取构件" w={74} gap={3} />
    <Grip $w={10} />
    <Tool n="twop" t="两点" w={51} />
    <Tool n="par" t="平行" w={67} gap={5} />
    <Chevrons $w={15}>»</Chevrons>
    <Grip $w={6} />
    <Blank />
  </Toolbar>
);
const Tb4 = () => (
  <Toolbar $pad={1} $w={649}>
    <Grip $w={14} />
    <Slot $w={59} $gap={5}><Ico n="cursor" s={11} /><span>选择</span><Caret $m={6} /></Slot>
    <Sep $w={3} />
    <PressedSlot $w={38}><Ico n="point" s={12} /><span>点</span></PressedSlot>
    <Tool n="rotp" t="旋转点" w={63} />
    <Sep $w={7} />
    <Tool n="line" t="直线" w={50} off />
    <Tool n="arc" t="三点画弧" w={84} off gap={3} drop={4} />
    <EmptyCombo><Caret $off /></EmptyCombo>
    <Tool n="rect" t="矩形" w={50} off gap={4} />
    <Sep $w={7} />
    <Tool n="adjR" t="调整钢筋方向" w={98} />
    <Tool n="adjS" t="调整集水坑放坡" w={107} gap={3} />
  </Toolbar>
);

const GRN = '#0c8a0c';
const RED = '#ff1414';
const CadLeft = () => (
  <svg width="743" height="550" viewBox="162 202 743 550" fill="none">
    <rect x="162" y="367" width="235" height="216" fill="#b4b4b4" />
    <path d="M162 366.500H520M193.500 202V583M396.500 202V583M573.500 498V583M737.500 498V583" stroke={RED} strokeWidth="1.400" />
    <rect x="307" y="543" width="179" height="82" fill="#808000" />
    <rect x="655" y="557" width="163" height="54" fill="#808000" />
    <path d="M367 543v82M427 543v82M307 581h179M307 597h179" stroke="#c05fa0" strokeWidth="2" />
    <path d="M380 579h24M380 595h24M370 570v-20M429 570v-20" stroke="#9a9a70" strokeDasharray="2 1" />
    <rect x="437.500" y="561.500" width="46" height="45" fill="#f0f" stroke="#fff" />
    <path d="M452 561v45M467 561v45M437 575.500h46M437 590.500h46" stroke="#f5e060" strokeWidth="2" />
    <rect x="750" y="571" width="37" height="22" fill="#f00000" />
    <path d="M162 583.500H905M396.500 543V583" stroke={RED} strokeWidth="1.400" />
    <path d="M162 651.500H905M162 719.500H905M193.500 584V752M396.500 584V752M573.500 584V752M737.500 584V752" stroke={GRN} strokeWidth="1.400" />
    <path d="M183 661l20-19M387 661l20-19M563 661l20-19M727 661l20-19" stroke="#3ea03e" />
    <circle cx="176" cy="366" r="12.500" stroke="#0a8a3a" strokeDasharray="3 1" />
    <circle cx="176" cy="583" r="12.500" stroke="#0a8a3a" strokeDasharray="3 1" />
    <text x="176" y="372" textAnchor="middle" fill="#9a9a9a" fontFamily="DejaVu Sans" fontSize="15">B</text>
    <text x="176" y="589" textAnchor="middle" fill="#eee" fontFamily="DejaVu Sans" fontSize="16">A</text>
    <g fill="#d8d8d8" fontFamily="DejaVu Sans" fontSize="16" textAnchor="middle">
      <text x="299" y="680">4500</text>
      <text x="489" y="680">3900</text>
      <text x="658" y="680">3600</text>
      <text x="863" y="680">5400</text>
    </g>
    <path d="M217 746V706" stroke="#00ee00" strokeWidth="4" />
    <path d="M217 697l4.500 11h-9z" fill="#00ee00" />
    <path d="M217 746h38" stroke="#f00000" strokeWidth="4" />
    <path d="M266 746l-12 4.500v-9z" fill="#f00000" />
    <path d="M227 702l4 5 4-5M231 707v6" stroke="#22cc44" />
    <path d="M255 726l8 8M263 726l-8 8" stroke="#c02020" />
  </svg>
);

const dots = Array.from({ length: 260 }, (_, i) => {
  const a = (i * 7919) % 997;
  const b = (i * 104729) % 991;
  return { a: a / 997, b: b / 991, i };
});

const Lo = ({ x, y, r }: { x: number; y: number; r?: boolean }) => (
  <text x={x} y={y} transform={r ? `rotate(-90 ${x} ${y})` : undefined} fill="#f4f4f4" fontFamily="Liberation Sans" fontSize="10">≫LoE</text>
);
const Rb = ({ x, y }: { x: number; y: number }) => (
  <text x={x} y={y} fill="#fff" fontWeight="700" fontSize="9" textLength="28" lengthAdjust="spacingAndGlyphs">筏板配筋</text>
);

const CadRight = () => (
  <svg width="548" height="578" viewBox="942 123 548 578" fill="none" style={{ background: '#000' }}>
    <path d="M967.500 123v15M1347.500 123v15" stroke="#e01020" strokeWidth="1.200" />
    <circle cx="967" cy="156" r="17" stroke="#e01020" strokeWidth="1.200" />
    <circle cx="1347" cy="156" r="17" stroke="#e01020" strokeWidth="1.200" />
    <text x="967" y="165" textAnchor="middle" fill="#ccc" fontFamily="Liberation Sans" fontSize="25" fontWeight="300">1</text>
    <text x="1347" y="165" textAnchor="middle" fill="#ccc" fontFamily="Liberation Sans" fontSize="25" fontWeight="300">2</text>
    <path d="M942 376.500h70M942 380h70" stroke="#a09a20" />
    <g stroke="#20a8b8" strokeWidth="1.300">
      <path d="M1202.500 362V226H1228V447H1355V362H1490" />
      <path d="M1028 362H1228" />
      <path d="M1028 446H1144V531H1439V446H1490" />
      <path d="M1028 455H1134V539H1448V455H1490" />
    </g>
    <g stroke="#e01818" strokeWidth="1.200">
      <path d="M1205 392V231H1225V447" />
      <path d="M1028 364.500H1225M1358 364.500H1490M1358 364V432" />
      <path d="M1028 443.500H1173M1412 443.500H1490M1203 449.500H1375" />
      <path d="M1146 447V528H1436V447" />
      <path d="M1147 417V443M1435 417V443M1242 452V472M1333 452V472" />
    </g>
    <g fill="#9fb0b0">
      {dots.map(d => d.i % 2 === 0
        ? <rect key={d.i} x={1135 + d.a * 312} y={532 + d.b * 6} width="1" height="1" />
        : d.i % 3 === 0
          ? <rect key={d.i} x={1135 + d.a * 8} y={456 + d.b * 76} width="1" height="1" />
          : d.i % 5 === 0
            ? <rect key={d.i} x={1440 + d.a * 7} y={456 + d.b * 76} width="1" height="1" />
            : <rect key={d.i} x={d.a > .5 ? 1449 + d.a * 40 : 1030 + d.a * 200} y={447 + d.b * 7} width="1" height="1" />)}
    </g>
    <g stroke="#10b030" strokeWidth="1.200">
      <path d="M1202.500 187V220M1228 187V220M1202 190H1229M1199 194l6-6M1225 190l6-6" />
      <path d="M1155 215.500H1190L1203 228" />
      <path d="M1133 294.500H1225M1192 294V286H1225" />
      <path d="M1278 362V530M1278 362H1344M1283 447V528M1292 447V528" />
      <path d="M1161 411.500H1225M1203 411V401H1225" />
      <path d="M1283 432.500H1329M1283 432V447M1292 432V447" />
      <path d="M1146 489.500H1210M1167 489V480H1146M1372 489.500H1436M1414 489V480H1436" />
      <path d="M1144 545V586M1228 545V586M1355 545V586M1439 545V586M1144 582H1439" />
      <path d="M1141 585l6-6M1225 585l6-6M1352 585l6-6M1436 585l6-6" />
    </g>
    <g fill="#eee" fontFamily="Liberation Sans" fontSize="13">
      <text x="1214" y="185" textAnchor="middle" fontSize="12" textLength="17" lengthAdjust="spacingAndGlyphs">300</text>
      <text x="1157" y="215" fontSize="12" textLength="23" lengthAdjust="spacingAndGlyphs">3Φ16</text>
      <text x="1133" y="294" fontSize="13" textLength="41" lengthAdjust="spacingAndGlyphs">Φ12@150</text>
      <text x="1184" y="576" textAnchor="middle" textLength="20" lengthAdjust="spacingAndGlyphs">1000</text>
      <text x="1290" y="576" textAnchor="middle" textLength="20" lengthAdjust="spacingAndGlyphs">1000</text>
      <text x="1396" y="576" textAnchor="middle" textLength="20" lengthAdjust="spacingAndGlyphs">1000</text>
      <text x="1271" y="416" transform="rotate(-90 1271 416)" textLength="20" lengthAdjust="spacingAndGlyphs">1000</text>
    </g>
    <Lo x={1197} y={398} r />
    <Lo x={1140} y={442} r />
    <Lo x={1241} y={490} r />
    <Lo x={1346} y={490} r />
    <Lo x={1454} y={442} r />
    <Lo x={1155} y={460} />
    <Lo x={1192} y={445} />
    <Lo x={1365} y={445} />
    <Lo x={1404} y={460} />
    <Rb x={1160} y={407} />
    <Rb x={1288} y={430} />
    <Rb x={1169} y={486} />
    <Rb x={1371} y={486} />
    <Rb x={1466} y={350} />
    <path d="M1466 354h24M1472 354l5 6 5-6" stroke="#10b030" />
    <text x="1160" y="651" fill="#dcdc20" fontSize="31" fontWeight="300" textLength="140" lengthAdjust="spacingAndGlyphs">柱墩处吸水槽示意</text>
    <rect x="1139" y="662" width="340" height="5" fill="#ffff00" />
    <path d="M1139 669.500h340" stroke="#c8c800" />
    <path d="M942 695.500h548" stroke="#999" />
    <path d="M960 693v5M992 693v5M1026 693v5M1064 693v5M1202 693v5" stroke="#ccc" />
  </svg>
);

const Lower = () => (
  <svg width="405" height="51" viewBox="909 701 405 51" fill="none" style={{ background: '#000' }}>
    <rect x="909" y="701" width="405" height="11" fill="#808080" />
    <rect x="1015" y="712" width="16" height="40" fill="#808080" />
    <rect x="1093" y="701" width="31" height="26" fill="#808080" />
    <g stroke="#e8e840">
      <path d="M1015 712v40M1031 712v40M989 712v40M1082 712v40M910 722v14" />
      <path d="M1093.500 701v26h30.500v-26M1186 701v10M1186 723v29" />
    </g>
    <path d="M1108 701v10M1108 730v2M1108 740v12" stroke="#ccc" />
  </svg>
);

export default function App() {
  return (
    <Desktop>
      <Global />
      <Defs />
      <LeftWin>
        <TitleBar>
          <TitleText>广联达<L>BIM</L>钢筋算量软件<L> GGJ2013 - [D:\</L>预结算及抽筋<L>\</L>广联达抽筋<L>\</L>测试<L>-2160.GGJ12]</L></TitleText>
          <WinBtns>
            <WinBtn><svg width="10" height="10"><rect x="1" y="7" width="6" height="2" fill="#fff" /></svg></WinBtn>
            <WinBtn><svg width="12" height="12" fill="none"><path d="M1 2h10v9H1z" stroke="#fff" /><path d="M1 2.500h10" stroke="#fff" strokeWidth="2" /></svg></WinBtn>
            <WinBtn $red><svg width="12" height="12" fill="none"><path d="M1 1l10 10M11 1L1 11" stroke="#fff" strokeWidth="2" /></svg></WinBtn>
          </WinBtns>
        </TitleBar>
        <MenuRow>
          <MenuItem $w={40} $m={-6}>件<L>(F)</L></MenuItem>
          {menu.map(([a, b, w]) => <MenuItem key={a} $w={w}>{a} <L>{b}</L></MenuItem>)}
          <MenuItem $w={71}><L>BIM</L>应用 <L>(I)</L></MenuItem>
          {menu2.map(([a, b, w]) => <MenuItem key={a} $w={w}>{a} <L>{b}</L></MenuItem>)}
          <Slot $w={72} $gap={2}><Ico n="newdoc" s={16} /><span>新建变更</span><Caret $m={6} /></Slot>
        </MenuRow>
        <SubMenu>广小二</SubMenu>
        <AccountRow>
          <Ghost />
          <AccountBox>
            <L>forpk.chen@163.com</L>
            <Caret $m={8} />
            <ActText $m={9}>造价豆<L>:0</L></ActText>
            <ActIcon $m={10}><Ico n="bell" s={14} /></ActIcon>
            <ActIcon $m={7}><Ico n="suggest" s={17} /></ActIcon>
            <ActText $m={2}>我要建议</ActText>
          </AccountBox>
        </AccountRow>
        <Tb1 />
        <Body>
          <NavPanel />
          <Main>
            <StackRow><Tb2 /></StackRow>
            <StackRow $mt={3}><Tb3 /></StackRow>
            <StackRow $mt={1}><Tb4 /></StackRow>
            <Canvas>
              <CadLeft />
              <CoordBox $l={612} $w={72}>17512.543</CoordBox>
              <CoordBox $l={690} $w={47} $navy>41.482</CoordBox>
              <Dialog>
                <DlgTitle>
                  <Ico n="logoDlg" s={14} />
                  <span>提示信息</span>
                  <DlgClose>
                    <svg width="13" height="13" fill="none"><path d="M1.500 1.500l10 10M11.500 1.500l-10 10" stroke="#fff" strokeWidth="2.400" /></svg>
                  </DlgClose>
                </DlgTitle>
                <DlgClient>
                  <DlgBox>
                    <DlgText>集水坑必须布置在筏板或为板式配筋且只有一个单元的承台上。</DlgText>
                    <VScroll>
                      <ScrollBtn><svg width="9" height="6" fill="none"><path d="M1 5l3.500-3.500L8 5" stroke="#c4c4ba" strokeWidth="1.500" /></svg></ScrollBtn>
                      <ScrollBtn><svg width="9" height="6" fill="none"><path d="M1 1l3.500 3.500L8 1" stroke="#c4c4ba" strokeWidth="1.500" /></svg></ScrollBtn>
                    </VScroll>
                    <HScroll>
                      <ScrollBtn><svg width="6" height="9" fill="none"><path d="M5 1L1.500 4.500 5 8" stroke="#c4c4ba" strokeWidth="1.500" /></svg></ScrollBtn>
                      <ScrollBtn><svg width="6" height="9" fill="none"><path d="M1 1l3.500 3.500L1 8" stroke="#c4c4ba" strokeWidth="1.500" /></svg></ScrollBtn>
                    </HScroll>
                    <Corner />
                  </DlgBox>
                  <DlgButton>关闭</DlgButton>
                </DlgClient>
              </Dialog>
            </Canvas>
          </Main>
        </Body>
      </LeftWin>

      <Browser>
        <BrTitle>
          <BrTitleText>安全浏览器 <L>9.1</L></BrTitleText>
          <BrMenu>
            <BrMenuItem $w={17}><svg width="8" height="12" fill="none"><path d="M1 1l5 5-5 5" stroke="#999" /></svg></BrMenuItem>
            <BrMenuItem $w={38}>文件</BrMenuItem>
            <BrMenuItem $w={37}>查看</BrMenuItem>
            <BrMenuItem $w={39}>收藏</BrMenuItem>
            <BrMenuItem $w={37}>工具</BrMenuItem>
            <BrMenuItem $w={39}>帮助</BrMenuItem>
            <SkinBtns>
              <SkinPart><svg width="11" height="10"><path d="M3 0l2 1.500h1L8 0l3 2-1 3H8.500v5h-6V5H1L0 2z" fill="#555" /></svg></SkinPart>
              <SkinPart>—</SkinPart>
            </SkinBtns>
          </BrMenu>
        </BrTitle>
        <AddrRow>
          <AddrCell $w={17}><svg width="10" height="10" fill="none"><path d="M0 5h9" stroke="#aaa" strokeWidth="1.500" /></svg></AddrCell>
          <AddrCell $w={30}><svg width="16" height="16" viewBox="0 0 16 16" fill="none"><path d="M13 5a6 6 0 1 0 1 4" stroke="#555" strokeWidth="1.800" /><path d="M14 1v5H9z" fill="#555" /></svg></AddrCell>
          <AddrCell $w={31} $plain><svg width="18" height="16" viewBox="0 0 18 16" fill="none"><path d="M1 8l8-7 8 7M4 7v8h10V7" stroke="#444" strokeWidth="1.700" /><rect x="7.500" y="10" width="3" height="5" fill="#444" /></svg></AddrCell>
          <AddrField>
            <Ico n="shield" />
            <Url>http://e.<UrlDark>fwxgx.com</UrlDark>/question/quest</Url>
            <UrlIcon $m={7}><Ico n="ring360" s={14} /></UrlIcon>
            <UrlIcon $m={6}><Ico n="bolt" s={14} /></UrlIcon>
          </AddrField>
          <AddrCell $w={25}><svg width="12" height="8" fill="none"><path d="M1 1l5 5 5-5" stroke="#555" strokeWidth="1.800" /></svg></AddrCell>
          <SearchField>点此搜索</SearchField>
        </AddrRow>
        <Bookmarks>
          <Mark $w={67} $m={-1}><Ico n="smile" s={11} /><span>网址大全</span></Mark>
          <Mark $w={79}><Ico n="doc" s={14} /><span>交通违法</span></Mark>
          <Mark $w={81} $gap={1}><Ico n="soft" s={16} /><span>软件<L>-2345</L></span></Mark>
          <Mark $w={81} $gap={1}><Ico n="weather" s={16} /><span>佛山天气</span></Mark>
          <Mark $w={73} $gap={4}><Ico n="paw" s={15} /><span>百度文库</span></Mark>
          <Mark $w={72}><MoreMark>»</MoreMark></Mark>
          <Mark $w={9}><Grip $w={4} /></Mark>
          <Mark $w={32}><Ico n="apps" s={18} /><Caret $m={7} /></Mark>
          <Mark $w={23} $m={7}><Ico n="book" /></Mark>
          <Mark $w={22}><Ico n="tv" /></Mark>
          <Mark $w={26}><AaIcon>Aa</AaIcon><Caret $m={10} /></Mark>
        </Bookmarks>
        <Tabs>
          <Tab $w={154} $m={-1} $first>
            <TabFade $w={132}>0导航_新一代安全上网导</TabFade>
            <TabX>×</TabX>
          </Tab>
          <Tab $w={190} $m={2}>
            <Ico n="ie" s={14} />
            <TabFade $w={141}>个人中心_广联达服务新干线</TabFade>
            <TabX>×</TabX>
          </Tab>
          <Tab $w={191} $m={3} $on>
            <Ico n="ie" s={14} />
            <TabFade $w={141}>老师，你好。这个下柱墩应</TabFade>
            <TabX>×</TabX>
          </Tab>
          <TabPlus>+</TabPlus>
        </Tabs>
        <PageArea>
          <PageUpper>
            <Gutter>谢谢</Gutter>
            <CadRight />
          </PageUpper>
          <LowerWrap><Lower /></LowerWrap>
          <SideBtn $top={399} $gray />
          <SideBtn $top={449} />
          <SideBtn $top={499} />
          <SideBtn $top={549} />
        </PageArea>
      </Browser>

      <Annotate width="1490" height="752" viewBox="0 0 1490 752" fill="none">
        <ellipse cx="728" cy="250" rx="239" ry="78" stroke="#e00010" strokeWidth="3" />
        <ellipse cx="773.500" cy="582.500" rx="45" ry="46" stroke="#e00010" strokeWidth="3" />
        <ellipse cx="1268" cy="501" rx="215" ry="159.500" stroke="#e00010" strokeWidth="3" />
      </Annotate>
    </Desktop>
  );
}
